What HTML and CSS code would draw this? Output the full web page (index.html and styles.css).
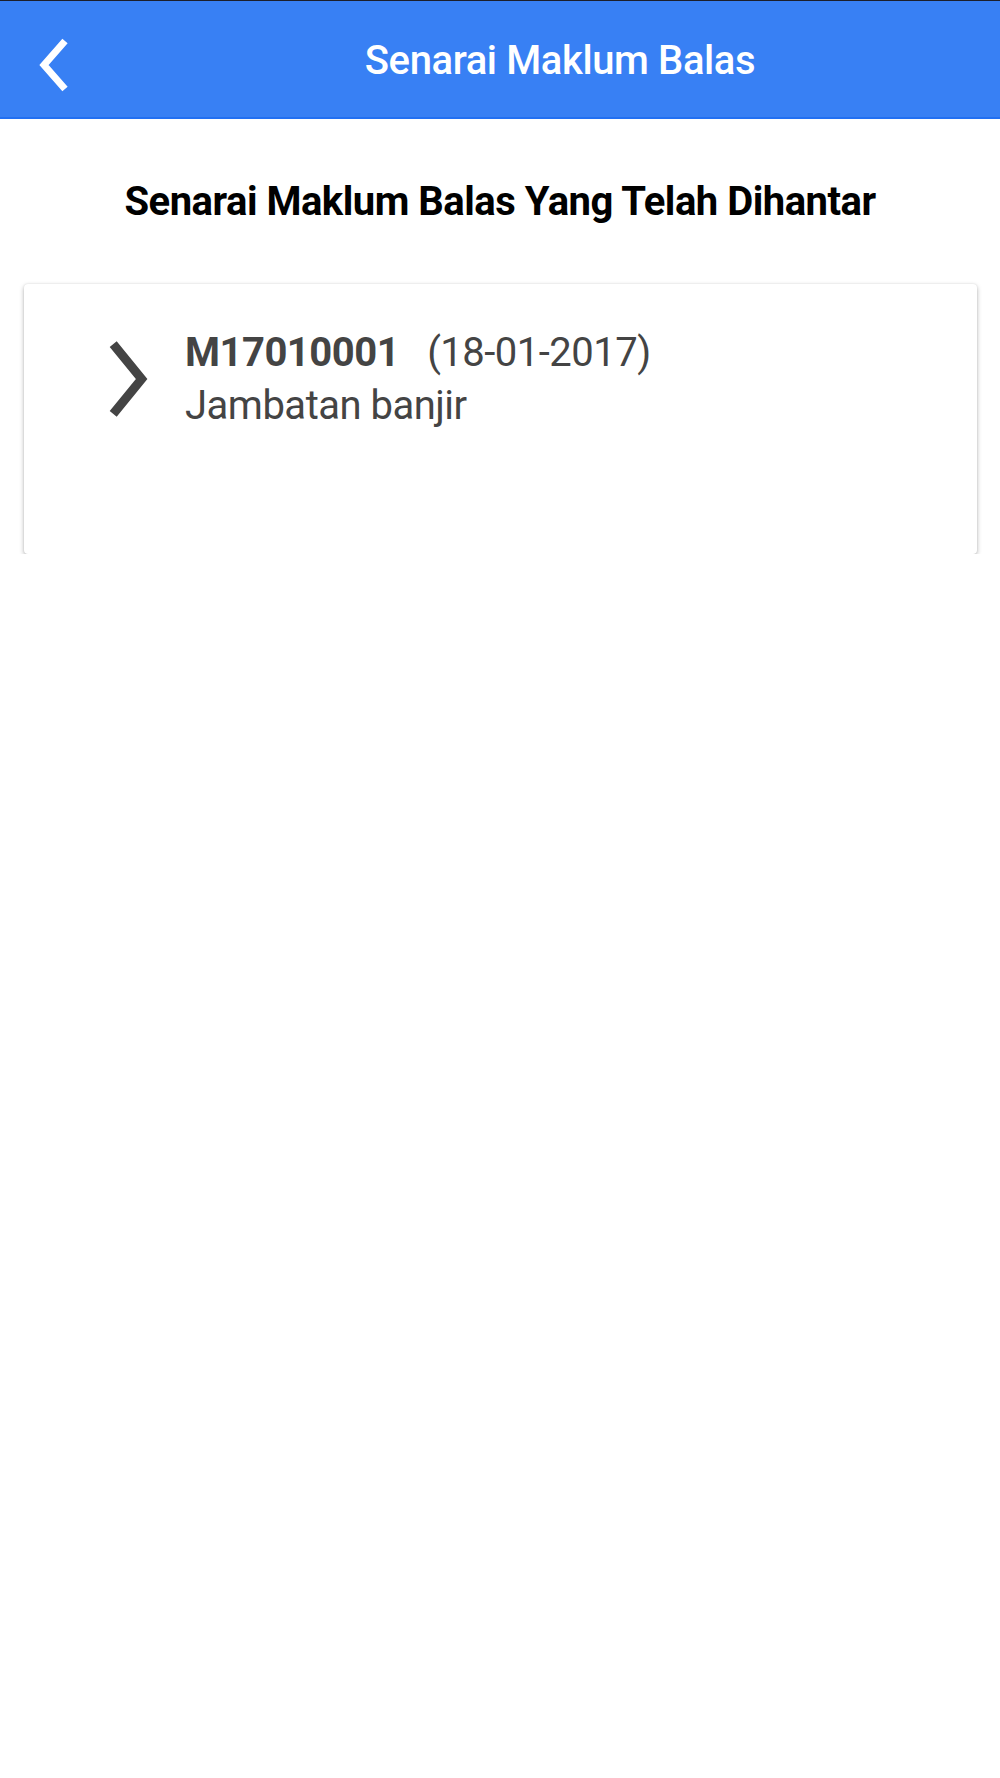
FILE: index.html
```html
<!DOCTYPE html>
<html lang="ms">
<head>
  <meta charset="UTF-8">
  <meta name="viewport" content="width=device-width, initial-scale=1.0">
  <title>Senarai Maklum Balas</title>
  <link rel="stylesheet" href="styles.css">
</head>
<body>
  <header class="topbar">
    <button class="back" aria-label="Kembali">
      <svg width="40" height="70" viewBox="0 0 40 70">
        <polyline points="35,17 14,41 35,65" fill="none" stroke="#fff" stroke-width="7"/>
      </svg>
    </button>
    <h1 class="title">Senarai Maklum Balas</h1>
  </header>

  <h2 class="subtitle">Senarai Maklum Balas Yang Telah Dihantar</h2>

  <div class="card">
    <div class="item">
      <svg class="chev" width="44" height="88" viewBox="0 0 44 88">
        <polyline points="7.2,9.2 35.6,44 7.2,78.8" fill="none" stroke="#444" stroke-width="9"/>
      </svg>
      <div class="info">
        <div class="line"><b class="ref">M17010001</b><span class="date">(18-01-2017)</span></div>
        <div class="line">Jambatan banjir</div>
      </div>
    </div>
  </div>
</body>
</html>
```

FILE: styles.css
```css
body{
  margin:0;
  background:#fff;
  font-family:Roboto,"Liberation Sans",sans-serif;
}
.topbar{
  display:flex;
  align-items:center;
  height:116px;
  background:#3880f4;
  border-top:1px solid #1c1f2b;
  border-bottom:2px solid #2270f2;
}
.back{
  width:120px;
  height:100%;
  padding:0 0 0 30px;
  border:none;
  background:none;
  display:flex;
  align-items:center;
  cursor:pointer;
}
.title{
  flex:1;
  margin:4px 0 0;
  text-align:center;
  color:#fff;
  font-size:40px;
  font-weight:500;
  letter-spacing:-0.4px;
  line-height:42px;
}
.subtitle{
  margin:58px 0 0;
  text-align:center;
  font-size:40px;
  line-height:50px;
  font-weight:700;
  letter-spacing:-0.5px;
  color:#000;
}
.card{
  margin:57px 23px 0 24px;
  height:270px;
  box-sizing:border-box;
  padding:42px 0 0 82px;
  background:#fff;
  border-radius:4px;
  box-shadow:0 2px 5px rgba(0,0,0,0.28),0 0 2px rgba(0,0,0,0.1);
}
.item{
  display:flex;
  align-items:center;
  gap:35px;
}
.info{
  color:#444;
  font-size:40px;
  letter-spacing:-0.5px;
  line-height:53px;
}
.ref{
  font-weight:700;
}
.date{
  margin-left:28px;
}
```
